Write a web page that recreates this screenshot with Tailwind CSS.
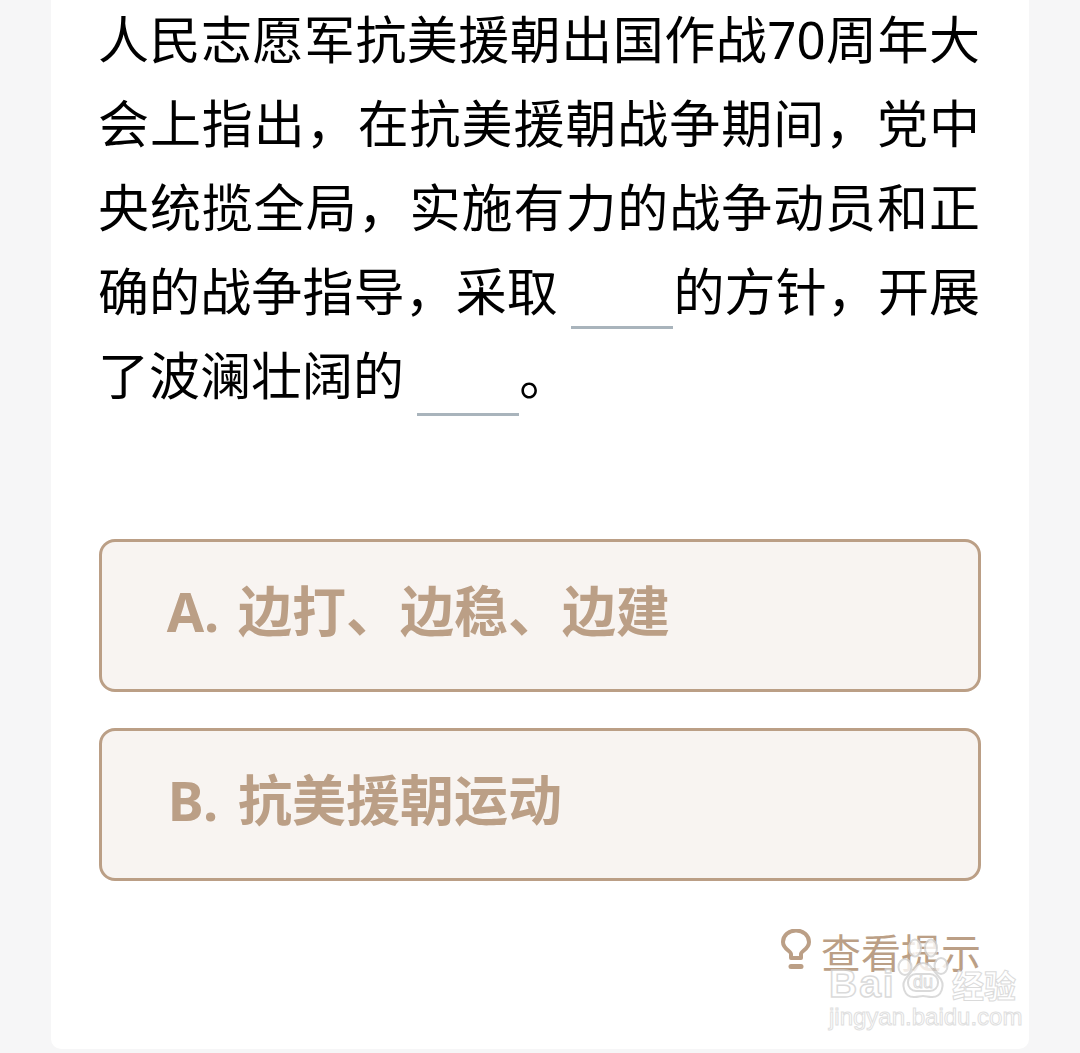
<!DOCTYPE html>
<html>
<head>
<meta charset="utf-8">
<title>题目</title>
<script src="https://cdn.jsdelivr.net/npm/@tailwindcss/browser@4"></script>
</head>
<body class="bg-[#f6f6f7] font-['Noto_Sans','Noto_Sans_CJK_SC',sans-serif] overflow-hidden">
  <div class="relative h-[1053px] overflow-hidden">
    <div class="flow-root mx-[51px] h-[1049px] bg-white rounded-b-[10px] px-[48px]">
      <p class="text-[51px] leading-[84px] text-black text-justify -mt-[3px] -ml-px w-[882px]">人民志愿军抗美援朝出国作战70周年大会上指出，在抗美援朝战争期间，党中央统揽全局，实施有力的战争动员和正确的战争指导，采取 <span class="inline-block w-[102px] h-[3px] bg-[#a9b4bc] align-[-18px]"></span>的方针，开展了波澜壮阔的 <span class="inline-block w-[102px] h-[3px] bg-[#a9b4bc] align-[-21px]"></span>。</p>
      <div class="mt-[122px] flex flex-col gap-[36px]">
        <div class="h-[153px] border-[3px] border-[#bb9f86] rounded-[16px] bg-[#f8f4f1] flex items-center pl-[61px] pb-[8px] text-[#bb9f86] text-[54px] font-bold"><span class="w-[60px] text-center">A.</span><span class="ml-[15px]">边打、边稳、边建</span></div>
        <div class="h-[153px] border-[3px] border-[#bb9f86] rounded-[16px] bg-[#f8f4f1] flex items-center pl-[61px] pb-[8px] text-[#bb9f86] text-[54px] font-bold"><span class="w-[60px] text-center">B.</span><span class="ml-[15px]">抗美援朝运动</span></div>
      </div>
      <div class="mt-[44px] flex justify-end items-center gap-[10px] text-[#bb9f86] text-[40px] leading-[56px]">
        <svg class="-mt-[8px]" width="30" height="40" viewBox="0 0 30 40" fill="none" stroke="#bb9f86" stroke-width="4" stroke-linecap="round" stroke-linejoin="round"><path d="M10 29v-4c0-3-8-5-8-12a13 11.500 0 0 1 26 0c0 7-8 9-8 12v4z"/><path d="M10 37.500h10" stroke-width="5"/></svg>
        <span>查看提示</span>
      </div>
    </div>
    <div class="absolute left-[829px] top-[938px] w-[195px] h-[92px] opacity-80 text-white">
      <span class="absolute left-0 top-[21px] font-['Liberation_Sans',sans-serif] text-[39px] tracking-[2px] font-bold leading-[50px] [-webkit-text-stroke:1.500px_#d2d2d2]">Bai</span>
      <svg class="absolute left-[68px] top-0" width="52" height="62" viewBox="0 0 52 62" fill="#fff" stroke="#d2d2d2" stroke-width="2"><ellipse cx="8" cy="29" rx="6.500" ry="8"/><ellipse cx="18" cy="10" rx="6" ry="8.500"/><ellipse cx="34" cy="10" rx="6" ry="8.500"/><ellipse cx="44" cy="28" rx="6.500" ry="8"/><path d="M26 25c-8 0-10 8-16 14-7 7-3 21 8 20 3 0 5-1 8-1s5 1 8 1c11 1 15-13 8-20-6-6-8-14-16-14z"/><rect x="11" y="36" width="30" height="17" rx="8"/><text x="26" y="50" text-anchor="middle" font-family="Liberation Sans" font-size="18" fill="#fff" stroke="#d2d2d2" stroke-width="1">du</text></svg>
      <span class="absolute left-[123px] top-[24px] font-['Noto_Sans_CJK_SC',sans-serif] text-[32px] font-bold leading-[44px] [-webkit-text-stroke:1px_#d2d2d2]">经验</span>
      <span class="absolute left-0 top-[65px] font-['Liberation_Sans',sans-serif] text-[24px] leading-[28px] [-webkit-text-stroke:1px_#d8d8d8]">jingyan.baidu.com</span>
    </div>
  </div>
</body>
</html>
